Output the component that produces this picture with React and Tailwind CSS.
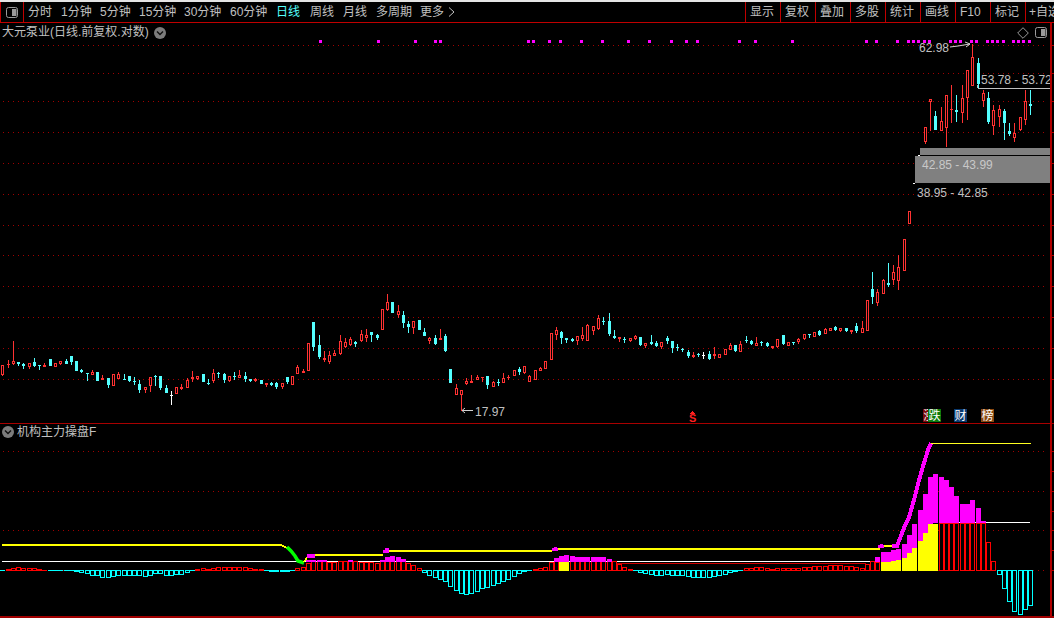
import React from "react";

const FONT = "[font-family:'Liberation_Sans','Noto_Sans_CJK_SC',sans-serif]";
const cxOf = (i) => Math.round(2.25 + 5.272 * i);

// body top, body bottom, wick high, wick low, colour (r red hollow, c cyan solid, w white)
const C = [
[365,375,365,376,"r"],[364,365,360,368,"r"],[361,364,341,365,"r"],[362,364,362,366,"c"],[364,366,363,369,"c"],[363,367,363,369,"r"],[362,366,358,367,"c"],[365,366,365,370,"c"],[365,367,363,367,"r"],[359,366,359,366,"c"],
[363,367,363,367,"r"],[361,364,361,365,"r"],[361,364,359,364,"c"],[356,362,356,365,"c"],[361,371,361,371,"c"],[370,372,369,373,"c"],[373,374,373,381,"c"],[372,375,370,375,"r"],[372,381,372,381,"c"],[378,380,375,380,"r"],
[378,385,378,388,"c"],[374,386,374,386,"r"],[374,379,372,379,"r"],[379,380,374,380,"c"],[376,381,376,382,"c"],[381,382,377,385,"c"],[384,390,380,393,"c"],[387,390,387,393,"r"],[377,386,377,392,"r"],[376,377,375,386,"c"],
[376,388,376,390,"c"],[388,393,385,393,"c"],[395,396,391,405,"w"],[387,394,387,394,"r"],[387,389,384,390,"r"],[380,388,378,388,"r"],[377,379,371,382,"r"],[376,379,376,380,"r"],[374,382,374,382,"c"],[383,384,379,385,"c"],
[373,381,369,383,"r"],[373,374,372,378,"c"],[374,380,373,383,"c"],[376,381,376,382,"r"],[376,377,372,380,"c"],[375,378,370,378,"r"],[376,379,372,382,"c"],[379,381,379,382,"c"],[379,381,378,382,"r"],[380,384,380,384,"c"],
[383,385,383,387,"r"],[383,385,382,386,"c"],[383,387,382,389,"c"],[383,387,383,389,"r"],[377,382,377,384,"c"],[376,385,376,385,"r"],[367,374,365,374,"r"],[371,373,369,373,"r"],[343,371,343,371,"r"],[322,347,322,351,"c"],
[345,357,335,359,"c"],[358,360,351,362,"r"],[355,362,351,364,"r"],[353,356,350,356,"r"],[341,354,335,355,"r"],[342,347,338,348,"r"],[339,345,337,346,"r"],[342,344,341,347,"c"],[334,341,330,342,"r"],[335,338,329,342,"r"],
[332,335,332,342,"c"],[335,338,334,340,"c"],[309,330,309,330,"r"],[302,310,294,311,"r"],[302,313,302,313,"c"],[311,315,305,318,"r"],[315,323,311,328,"c"],[324,327,321,333,"c"],[321,328,321,334,"r"],[320,330,320,330,"c"],
[332,336,328,336,"c"],[338,341,337,344,"r"],[338,344,335,345,"c"],[338,340,329,340,"r"],[336,351,334,352,"c"],[369,383,369,383,"c"],[388,395,384,395,"r"],[390,395,390,411,"r"],[381,384,378,385,"r"],[381,383,375,383,"r"],
[377,380,375,380,"r"],[377,378,377,382,"r"],[376,385,376,389,"c"],[382,387,381,387,"r"],[382,383,379,386,"c"],[378,383,373,383,"r"],[377,378,375,380,"r"],[370,376,370,376,"r"],[369,372,367,375,"c"],[366,373,366,374,"r"],
[376,382,375,382,"r"],[370,380,370,380,"r"],[368,371,367,371,"r"],[361,369,361,369,"r"],[333,360,333,360,"r"],[330,335,327,340,"r"],[332,338,331,344,"c"],[338,340,338,343,"c"],[339,341,338,342,"c"],[336,341,336,345,"r"],
[335,339,327,341,"r"],[325,341,324,341,"r"],[326,331,326,335,"r"],[318,329,315,330,"r"],[321,322,317,325,"c"],[321,334,313,336,"c"],[336,338,330,339,"c"],[337,339,337,342,"r"],[339,340,337,343,"c"],[338,341,338,342,"r"],
[336,339,335,340,"r"],[337,345,337,346,"c"],[343,346,343,348,"r"],[342,344,335,345,"c"],[343,346,341,347,"c"],[342,347,342,349,"r"],[338,341,336,344,"c"],[341,348,341,353,"c"],[347,348,344,351,"c"],[349,350,348,352,"c"],
[352,356,350,358,"c"],[355,357,352,358,"r"],[354,355,353,357,"c"],[355,356,352,359,"w"],[354,359,351,360,"c"],[354,356,347,359,"r"],[354,358,354,358,"r"],[349,355,349,355,"r"],[345,350,343,350,"r"],[345,351,345,352,"c"],
[344,352,341,352,"r"],[340,341,336,343,"c"],[341,344,340,345,"c"],[343,346,337,346,"r"],[342,343,341,346,"c"],[343,346,342,347,"c"],[346,348,346,349,"r"],[339,347,339,348,"r"],[335,344,335,345,"c"],[342,346,342,346,"r"],
[342,343,342,345,"c"],[339,342,338,344,"r"],[334,339,334,340,"r"],[334,335,334,338,"c"],[332,337,332,337,"r"],[331,335,330,336,"c"],[329,334,328,334,"r"],[328,331,328,331,"r"],[327,330,326,331,"c"],[328,331,328,332,"r"],
[328,331,328,332,"c"],[330,332,330,334,"r"],[326,331,323,333,"c"],[328,333,321,333,"r"],[300,331,300,331,"r"],[289,297,272,304,"c"],[292,303,289,306,"r"],[280,294,279,294,"r"],[283,285,263,287,"c"],[272,280,265,285,"r"],
[267,281,255,290,"r"],[239,271,239,271,"r"],[211,224,211,224,"r"],null,null,[127,142,127,144,"r"],[99,102,99,131,"r"],[116,130,111,130,"c"],[121,131,107,131,"r"],[95,128,95,147,"r"],
[109,110,85,123,"r"],[110,112,95,122,"c"],[98,113,85,123,"r"],[70,98,70,120,"r"],[57,86,44,86,"r"],[63,84,58,88,"c"],[93,101,90,107,"r"],[98,122,92,124,"c"],[110,126,105,135,"r"],[109,117,105,127,"r"],
[111,123,109,140,"c"],[131,134,123,136,"c"],[133,138,123,142,"r"],[117,130,117,131,"r"],[101,120,90,125,"r"],[104,106,90,115,"c"],
];

// histogram height per candle: + red up, - cyan down
const H = [
-0.5,1,2,3,2,2,2,1,0.5,-0.5,-0.5,-0.5,-0.5,-0.5,-1,-2,-3,-5,-5,-7,
-7,-6,-5,-5,-5,-5,-5,-6,-5,-3,-3,-5,-5,-4,-4,-2,-0.5,1,2,1,
1.5,3,3,3,3,3,3,2,1,1,-0.5,-1,-1,-1,-1,-0.5,2,3,7,9,
9,9,8,8,9,9,9,9,8,8,8,7,9,9,9,9,9,7,5,1.5,
-2,-5,-7,-9,-11,-16,-20,-23,-24,-23,-21,-18,-17,-15,-13,-11,-9,-6,-3,-1,
-0.5,1,2,3,8,9,9,9,9,9,9,9,9,9,9,9,9,6,3,1,
-0.5,-2,-3,-4,-5,-5,-4,-5,-5,-5,-6,-7,-7,-7,-7,-6,-5,-4,-2,-1,
-0.5,2,2,3,3,2,1,2,2,2,2,2,3,3,4,4,4,5,5,5,
4,4,3,2,6,9,8,9,9,10,11,13,18,23,30,38,47,47,47,47,
47,47,47,47,47,47,47,28,9,-4,-18,-31,-41,-44,-39,-35,
];

const isYellow = (i) => i === 106 || i === 107 || (i >= 167 && i <= 177);

// magenta columns: candle index, top y, bottom y
const M = [
[58,560,562],[59,560,562],[60,560,562],[61,560,562],[66,560,562],[72,560,562],[73,557,562],[74,556,562],[75,557,562],[76,559,562],
[105,558,562],[106,556,562],[107,555,562],[108,556,562],[109,557,562],[110,557,562],[111,557,562],[112,557,562],[113,557,562],[114,557,562],[115,559,562],
[166,557,562],[167,552,562],[168,552,562],[169,550,561],[170,549,560],[171,544,558],[172,535,553],[173,524,548],[174,510,541],[175,494,533],
[176,477,524],[177,474,523],[178,477,523],[179,480,523],[180,487,523],[181,496,523],[182,504,523],[183,504,523],[184,500,523],[185,508,523],[186,521,523],
];

const PINK = [320,378,415,435,440,528,533,549,560,581,602,628,649,671,686,697,739,755,792,866,876,897,908,913,918,924,929,950,955,960,971,976,987,992,997,1003,1013,1018,1023,1029];
const GRID_TOP = [45,73,101,132,163,194,225,255,286,317,348,379];
const GRID_BOT = [451,491,530,570];
const LEFT_TABS = [["分时",33],["1分钟",39],["5分钟",39],["15分钟",45],["30分钟",46],["60分钟",46],["日线",34,true],["周线",33],["月线",33],["多周期",44],["更多",24]];
const RIGHT_TABS = ["显示","复权","叠加","多股","统计","画线","F10","标记"];

// a 1px outlined box built from two solid rects, so the edges stay on whole pixels
function Hollow({ x, y, w, h, color }) {
  return (
    <g>
      <rect x={x} y={y} width={w} height={h} fill={color} />
      {w > 2 && h > 2 ? <rect x={x + 1} y={y + 1} width={w - 2} height={h - 2} fill="#000" /> : null}
    </g>
  );
}

function Chevron() {
  return (
    <span className="flex h-3 w-3 shrink-0 items-center justify-center rounded-full bg-[#7c7c7c]">
      <svg width="8" height="6" viewBox="0 0 8 6"><path d="M1 1.5 L4 4.5 L7 1.5" fill="none" stroke="#101010" strokeWidth="1.4" /></svg>
    </span>
  );
}

function Toggle() {
  return (
    <svg width="12" height="11" viewBox="0 0 12 11">
      <rect x="0.5" y="0.5" width="11" height="10" rx="2" fill="#000" stroke="#9a9a9a" />
      <rect x="6" y="2" width="4.5" height="7" fill="#9a9a9a" />
    </svg>
  );
}

function PriceChart() {
  return (
    <svg className="absolute inset-0 block" width="1054" height="400" viewBox="0 23 1054 400" shapeRendering="crispEdges">
      {GRID_TOP.map((y) => (
        <g key={y}>
          <line x1="3" x2="1048" y1={y + 0.5} y2={y + 0.5} stroke="#a00000" strokeDasharray="1 4" />
          <rect x="1052" y={y} width="2" height="1" fill="#b00000" />
        </g>
      ))}
      {PINK.map((x) => <rect key={x} x={x - 1} y="40" width="3" height="3" fill="#ff00ff" />)}
      {C.map((c, i) => {
        if (!c) return null;
        const [t, b, h, l, k] = c;
        const x = cxOf(i);
        const col = k === "r" ? "#ff3232" : k === "c" ? "#54ffff" : "#ffffff";
        return (
          <g key={i}>
            <rect x={x} y={h} width="1" height={l - h} fill={col} />
            {k === "r" && b - t > 2 ? (
              <Hollow x={x - 1} y={t} w={3} h={b - t} color={col} />
            ) : (
              <rect x={x - 1} y={t} width="3" height={Math.max(b - t, 1)} fill={col} />
            )}
          </g>
        );
      })}
      <path d="M950 47 L958 46 L970 44 M965 42 L970 44 L966 47" fill="none" stroke="#d0d0d0" shapeRendering="auto" />
      <path d="M473 410.5 H462 M465 408 L462 410.5 L465 413" fill="none" stroke="#d0d0d0" shapeRendering="auto" />
      <rect x="977" y="85" width="1" height="3" fill="#c0c0c0" />
      <rect x="978" y="88" width="72" height="1" fill="#c0c0c0" />
      <rect x="918" y="155" width="2" height="1" fill="#fff" />
      <rect x="913" y="183" width="2" height="1" fill="#fff" />
      <path d="M689 414 L692 411 L695 414 Z" fill="#ff2020" />
    </svg>
  );
}

function IndicatorChart() {
  return (
    <svg className="absolute inset-0 block" width="1054" height="194" viewBox="0 424 1054 194" shapeRendering="crispEdges">
      {GRID_BOT.map((y) => (
        <line key={y} x1="3" x2="1048" y1={y + 0.5} y2={y + 0.5} stroke="#a00000" strokeDasharray="1 4" />
      ))}
      {[451,471,491,511,530,550,570].map((y) => <rect key={y} x="1052" y={y} width="2" height="1" fill="#b00000" />)}
      <rect x="2" y="561" width="869" height="1" fill="#fff" />
      <rect x="617" y="563" width="249" height="1" fill="#d00000" />
      <rect x="906" y="554" width="2" height="1" fill="#fff" />
      <rect x="922" y="536" width="2" height="1" fill="#fff" />
      <rect x="943" y="522" width="87" height="1" fill="#fff" />
      {H.map((v, i) => {
        const x = cxOf(i);
        if (isYellow(i)) return <rect key={i} x={x - 2} y={571 - v} width="5" height={v} fill="#ffff00" />;
        if (Math.abs(v) < 1) return <rect key={i} x={x - 2} y="570" width="5" height="1" fill={v > 0 ? "#ff0000" : "#00ffff"} />;
        if (v > 0) {
          const h = Math.round(v) + 1;
          return <Hollow key={i} x={x - 2} y={571 - h} w={5} h={h} color="#ff0000" />;
        }
        return <Hollow key={i} x={x - 2} y={570} w={5} h={Math.round(-v) + 1} color="#00ffff" />;
      })}
      {M.map(([i, t, b]) => <rect key={i} x={cxOf(i) - 2} y={t} width="5" height={b - t} fill="#ff00ff" />)}
      <rect x="2" y="544" width="279" height="2" fill="#ffff00" />
      <path d="M281 545 L287 548" fill="none" stroke="#ffff00" strokeWidth="2" />
      <path d="M287 547 L291 551 L295 556 L298 561 L304 563" fill="none" stroke="#00ff00" strokeWidth="3.5" shapeRendering="auto" />
      <path d="M304 562 L308 556" fill="none" stroke="#ffff00" strokeWidth="1.5" />
      <rect x="315" y="554" width="68" height="2" fill="#ffff00" />
      <rect x="389" y="550" width="163" height="2" fill="#ffff00" />
      <rect x="558" y="548" width="322" height="2" fill="#ffff00" />
      <rect x="884" y="545" width="9" height="2" fill="#ffff00" />
      <rect x="307" y="554" width="8" height="4" fill="#ff00ff" />
      <rect x="383" y="550" width="6" height="3" fill="#ff00ff" />
      <rect x="385" y="548" width="4" height="2" fill="#ff00ff" />
      <rect x="552" y="548" width="6" height="3" fill="#ff00ff" />
      <rect x="554" y="547" width="3" height="1" fill="#ff00ff" />
      <rect x="878" y="545" width="6" height="3" fill="#ff00ff" />
      <rect x="880" y="544" width="3" height="1" fill="#ff00ff" />
      <rect x="892" y="544" width="7" height="4" fill="#ff00ff" />
      <path d="M897 546 L904 528 L909 517 L914 500 L919 480 L924 463 L928 450 L931 443" fill="none" stroke="#ff00ff" strokeWidth="4" />
      <rect x="931" y="443" width="100" height="1" fill="#ffff20" />
    </svg>
  );
}

function Badge({ bg, left, children }) {
  return (
    <span className={`absolute bottom-[1px] flex h-[13px] w-[13px] items-center justify-center text-[12px] leading-none text-white ${bg} ${left}`}>
      {children}
    </span>
  );
}

export default function App() {
  return (
    <div className={`flex h-[618px] w-[1054px] flex-col overflow-hidden bg-black text-[#c0c0c0] text-[12px] ${FONT}`}>
      <div className="h-[2px] shrink-0 bg-[#e4e4e4]" />
      <div className="flex h-[21px] shrink-0 items-stretch border-b border-[#c00000] leading-[21px]">
        <div className="flex w-[24px] shrink-0 items-center justify-center border-x border-[#c00000]"><Toggle /></div>
        <div className="ml-[4px] flex items-center">
          {LEFT_TABS.map(([t, w, on]) => (
            <span key={t} style={{ width: w }} className={`whitespace-nowrap ${on ? "text-[#54ffff]" : ""}`}>{t}</span>
          ))}
          <svg className="ml-[4px]" width="7" height="10" viewBox="0 0 7 10"><path d="M1 0.5 L6 5 L1 9.5" fill="none" stroke="#c0c0c0" /></svg>
        </div>
        <div className="ml-auto flex w-[309px] overflow-hidden">
          {RIGHT_TABS.map((t) => (
            <span key={t} className="w-[35px] shrink-0 whitespace-nowrap border-l border-[#c00000] pl-[4px]">{t}</span>
          ))}
          <span className="w-[30px] shrink-0 overflow-hidden whitespace-nowrap border-l border-[#c00000] pl-[3px]">+自选股</span>
        </div>
      </div>

      <div className="relative h-[400px] shrink-0">
        <PriceChart />
        <div className="relative flex h-[19px] items-center gap-[5px] pl-[2px] leading-[19px]">
          <span>大元泵业(日线.前复权.对数)</span>
          <Chevron />
        </div>
        <svg className="absolute left-[1017px] top-[4px]" width="12" height="12" viewBox="0 0 12 12"><path d="M6 0.7 L11.3 6 L6 11.3 L0.7 6 Z" fill="none" stroke="#9a9a9a" /></svg>
        <span className="absolute left-[1035px] top-[4px]"><Toggle /></span>
        <span className="absolute left-[919px] top-[18px] leading-[14px]">62.98</span>
        <span className="absolute left-[981px] top-[50px] w-[69px] overflow-hidden whitespace-nowrap leading-[14px]">53.78 - 53.72</span>
        <div className="absolute left-[920px] top-[125px] h-[7px] w-[130px] bg-[#808080]" />
        <div className="absolute left-[915px] top-[133px] h-[27px] w-[135px] bg-[#808080] pl-[7px] pt-[2px] leading-[14px] text-[#c8c8c8]">42.85 - 43.99</div>
        <span className="absolute left-[917px] top-[163px] leading-[14px]">38.95 - 42.85</span>
        <span className="absolute left-[475px] top-[382px] leading-[14px]">17.97</span>
        <span className="absolute left-[689px] top-[389px] text-[11px] font-bold leading-[12px] text-[#ff2020]">S</span>
        <Badge bg="bg-[#7a0a0a]" left="left-[923px]">涨</Badge>
        <Badge bg="bg-[#0c7a0c]" left="left-[928px]">跌</Badge>
        <Badge bg="bg-[#0a3a70]" left="left-[954px]">财</Badge>
        <Badge bg="bg-[#8a4a12]" left="left-[981px]">榜</Badge>
      </div>

      <div className="relative flex-1 border-t border-[#a80000]">
        <IndicatorChart />
        <div className="relative flex h-[16px] items-center gap-[3px] pl-[2px] leading-[16px]">
          <Chevron />
          <span>机构主力操盘F</span>
        </div>
      </div>
      <div className="pointer-events-none fixed left-[1050px] top-[23px] h-[595px] w-[2px] bg-[#b00000]" />
      <div className="pointer-events-none fixed left-0 top-[616px] h-[2px] w-[1054px] bg-[#a00000]" />
    </div>
  );
}
